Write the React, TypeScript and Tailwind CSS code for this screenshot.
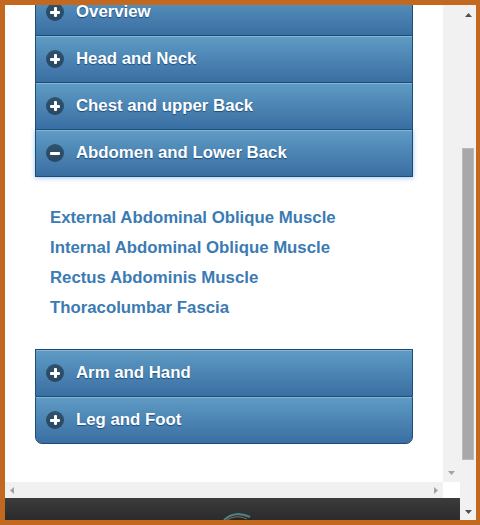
import React from "react";

const FONT = { fontFamily: '"Liberation Sans", Arial, Helvetica, sans-serif' };

type Tri = "up" | "down" | "left" | "right";

function Arrow({ dir, color }: { dir: Tri; color: string }) {
  const pts: Record<Tri, string> = {
    up: "0,4 3.5,0 7,4",
    down: "0,0 7,0 3.5,4",
    left: "4,0 4,7 0,3.5",
    right: "0,0 0,7 4,3.5",
  };
  const horiz = dir === "up" || dir === "down";
  return (
    <svg width={horiz ? 7 : 4} height={horiz ? 4 : 7} className="block">
      <polygon points={pts[dir]} fill={color} />
    </svg>
  );
}

function Icon({ open }: { open: boolean }) {
  return (
    <span className="relative flex h-[18px] w-[18px] shrink-0 items-center justify-center rounded-full bg-[rgba(0,0,0,0.42)]">
      <span className="absolute h-[3px] w-[10px] rounded-[1px] bg-white" />
      {!open && <span className="absolute h-[10px] w-[3px] rounded-[1px] bg-white" />}
    </span>
  );
}

function Header({
  label,
  open = false,
  last = false,
  rounded = false,
}: {
  label: string;
  open?: boolean;
  last?: boolean;
  rounded?: boolean;
}) {
  return (
    <div
      className={
        "relative flex h-[47px] items-center border-x border-t border-[#1c4c78] bg-gradient-to-b from-[#5f9cc5] to-[#3a6ea2] pl-[10px] " +
        (last ? "h-[48px] border-b " : "") +
        (rounded ? "rounded-b-[7px] " : "") +
        (open ? "z-10 shadow-[0_1px_5px_rgba(40,130,215,0.45)] " : "")
      }
    >
      <div className="pointer-events-none absolute inset-x-0 top-0 h-px bg-[rgba(255,255,255,0.25)]" />
      <Icon open={open} />
      <span
        className="ml-[12px] text-[16.8px] font-bold leading-none text-white [text-shadow:0_1px_1px_#194b7e]"
        style={FONT}
      >
        {label}
      </span>
    </div>
  );
}

const links = [
  "External Abdominal Oblique Muscle",
  "Internal Abdominal Oblique Muscle",
  "Rectus Abdominis Muscle",
  "Thoracolumbar Fascia",
];

export default function App() {
  return (
    <div className="flex h-[525px] w-[480px] border-b-[5px] border-l-[5px] border-r-[4px] border-t-[5px] border-[#c2681f] bg-[#c2681f]">
      {/* framed page with its own scrollbars */}
      <div className="flex w-[455px] flex-col">
        <div className="flex h-[477px]">
          <div className="h-full w-[438px] overflow-hidden bg-white">
            <div className="ml-[30px] mt-[-17px] w-[378px]">
              <Header label="Overview" />
              <Header label="Head and Neck" />
              <Header label="Chest and upper Back" />
              <Header label="Abdomen and Lower Back" open last />
              <div className="flex h-[172px] flex-col pl-[15px] pt-[26px]">
                {links.map((l) => (
                  <a
                    key={l}
                    className="block h-[30px] text-[16.8px] font-bold leading-[30px] text-[#3b7bb3]"
                    style={FONT}
                  >
                    {l}
                  </a>
                ))}
              </div>
              <Header label="Arm and Hand" />
              <Header label="Leg and Foot" last rounded />
            </div>
          </div>
          <div className="flex h-full w-[17px] flex-col items-center justify-end bg-[#f1f1f1] pb-[7px]">
            <Arrow dir="down" color="#a3a3a3" />
          </div>
        </div>
        <div className="flex h-[16px]">
          <div className="flex w-[438px] items-center justify-between bg-[#f1f1f1] px-[5px]">
            <Arrow dir="left" color="#a3a3a3" />
            <Arrow dir="right" color="#a3a3a3" />
          </div>
          <div className="w-[17px] bg-white" />
        </div>
        <div className="relative h-[22px] overflow-hidden bg-gradient-to-b from-[#3c3c3c] to-[#2b2b2b]">
          <svg width="36" height="22" className="absolute left-[212px] top-0">
            <ellipse cx="21" cy="26" rx="15" ry="11" fill="#1f2a2c" />
            <path d="M7 22 Q18 12 33 19" stroke="#4f7f86" strokeWidth="2" fill="none" />
            <path d="M10 22 Q20 16 30 21" stroke="#9b6a3a" strokeWidth="1" fill="none" />
          </svg>
        </div>
      </div>
      {/* outer scrollbar */}
      <div className="flex w-[16px] flex-col items-center bg-[#f1f1f1]">
        <div className="flex h-[20px] items-center justify-center">
          <Arrow dir="up" color="#505050" />
        </div>
        <div className="mt-[123px] h-[312px] w-[12px] border border-[#b9b9b9] bg-[#a8a8a8]" />
        <div className="flex-1" />
        <div className="flex h-[16px] items-center justify-center">
          <Arrow dir="down" color="#505050" />
        </div>
      </div>
    </div>
  );
}
